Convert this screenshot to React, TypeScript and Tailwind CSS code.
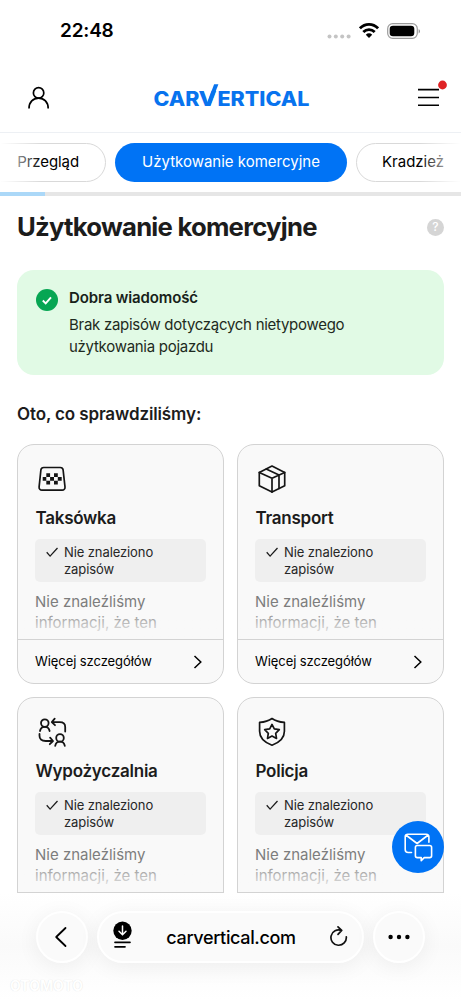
import React from 'react';

const TaxiIcon = () => (
  <svg width="30" height="30" viewBox="0 0 30 30" fill="none" stroke="#151515" strokeWidth="1.700" strokeLinejoin="round">
    <path d="M6.7 3.500h16.600c1.500 0 2.600.9 2.800 2.300l1.900 17.100c.2 2-1 3.300-2.900 3.300H5c-1.900 0-3.100-1.300-2.900-3.300L3.900 5.800c.2-1.400 1.300-2.300 2.800-2.300z" />
    <g fill="#151515" stroke="none">
      <path d="M9.300 9.200h3.800v3.800h-3.800zM17 9.200h3.800v3.800H17zM5.700 13h3.600v3.800H5.700zM13.100 13H17v3.800h-3.900zM20.800 13h3.900v3.800h-3.900zM9.300 16.800h3.800v3.800h-3.800zM17 16.800h3.800v3.800H17z" />
    </g>
  </svg>
);

const BoxIcon = () => (
  <svg width="30" height="30" viewBox="0 0 30 30" fill="none" stroke="#151515" strokeWidth="1.700" strokeLinejoin="round" strokeLinecap="round">
    <path d="M15 2.100l12.700 6.300v13.400L15 28.100 2.300 21.800V8.400z" />
    <path d="M2.300 8.400L15 14.300l12.700-5.900M15 14.300v13.800M9.200 5.100L22 11v13.500" />
  </svg>
);

const RentalIcon = () => (
  <svg width="30" height="30" viewBox="0 0 30 30" fill="none" stroke="#151515" strokeWidth="1.800" strokeLinejoin="round" strokeLinecap="round">
    <circle cx="7.800" cy="6.100" r="3.800" />
    <path d="M3 14c.5-2.700 2.200-4.100 4.800-4.100s4.300 1.400 4.800 4.100" />
    <circle cx="23" cy="20.900" r="3.800" />
    <path d="M18.200 28.800c.5-2.700 2.200-4.100 4.800-4.100s4.300 1.400 4.800 4.100" />
    <path d="M17.700 1.700l-2.900 3.400 3.200 3.100M15.200 5.100h7.600c3.700 0 5.400 1.700 5.400 4.900v4.600" />
    <path d="M13.100 20.600l2.900 3.400-3.200 3.200M15.700 24H8.800c-4.100 0-6.300-2-6.300-5.200v-1.900" />
  </svg>
);

const PoliceIcon = () => (
  <svg width="30" height="30" viewBox="0 0 30 30" fill="none" stroke="#151515" strokeWidth="1.700" strokeLinejoin="round">
    <path d="M15 1.500c3.500 2.500 7.200 3.600 12.400 3.900v8.900c0 6.500-4.300 11-12.400 13.900C6.900 25.300 2.600 20.800 2.600 14.300V5.400C7.800 5.100 11.500 4 15 1.500z" />
    <path d="M15 7.400l2.300 4.500 5 .8-3.600 3.600.8 5.100-4.500-2.300-4.500 2.300.8-5.100-3.600-3.600 5-.8z" />
  </svg>
);

const cards = [
  { title: 'Taksówka', icon: <TaxiIcon />, more: true },
  { title: 'Transport', icon: <BoxIcon />, more: true },
  { title: 'Wypożyczalnia', icon: <RentalIcon />, more: false },
  { title: 'Policja', icon: <PoliceIcon />, more: false },
];

const StatusBar = () => (
  <div className="h-[63px] pl-[60px] pr-[40px] flex items-center justify-between shrink-0">
    <span className="text-[19px] font-semibold text-black tracking-[-0.2px]">22:48</span>
    <div className="flex items-center">
      <svg width="26" height="20" viewBox="0 0 26 20" fill="#c4c4c4">
        <circle cx="3.500" cy="14.500" r="2" />
        <circle cx="9.800" cy="14.500" r="2" />
        <circle cx="16.200" cy="14.500" r="2" />
        <circle cx="22.600" cy="14.500" r="2" />
      </svg>
      <svg className="ml-[7px] mb-[2px]" width="20" height="20" viewBox="0 0 20 20" fill="none" stroke="#000" strokeWidth="2.800">
        <path d="M.9 7.300C6 2 14 2 19.100 7.300" />
        <path d="M4.300 11c3.300-3.300 8.100-3.300 11.400 0" />
        <path d="M10 17l-3.200-3.300c1.800-1.800 4.600-1.800 6.400 0z" fill="#000" stroke="none" />
      </svg>
      <svg className="ml-2 mb-[2px]" width="34" height="20" viewBox="0 0 34 20">
        <rect x=".7" y="2.700" width="29.600" height="14.600" rx="5" fill="none" stroke="#9b9b9b" strokeWidth="1.200" />
        <rect x="2.700" y="4.700" width="24.600" height="10.600" rx="3.300" />
        <path d="M31.700 8v4.400c1.700-.8 1.700-3.600 0-4.400z" fill="#8a8a8a" />
      </svg>
    </div>
  </div>
);

const Logo = () => (
  <svg width="158" height="26" viewBox="0 0 158 26" fill="#0873ee" className="font-['Inter'] font-extrabold text-[20px]">
    <text x="0.500" y="22.500" textLength="46" lengthAdjust="spacingAndGlyphs">CAR</text>
    <text x="45.500" y="22.500" textLength="18" lengthAdjust="spacingAndGlyphs">V</text>
    <path d="M61.100 1.200h4.300L57.300 22.500h-4.300z" />
    <text x="64.500" y="22.500" textLength="92" lengthAdjust="spacingAndGlyphs">ERTICAL</text>
  </svg>
);

const Header = () => (
  <header className="h-[70px] pl-[28px] pr-[14px] flex items-center justify-between border-b border-[#edf0f4] shrink-0">
    <svg width="22" height="24" viewBox="0 0 22 24" fill="none" stroke="#000" strokeWidth="1.700">
      <circle cx="10.600" cy="6.900" r="5.200" />
      <path d="M1 22.500C1 16 5.100 12.100 10.600 12.100S20.200 16 20.200 22.500" />
    </svg>
    <div className="mb-[3px]">
      <Logo />
    </div>
    <svg className="mb-[9px]" width="33" height="30" viewBox="0 0 33 30">
      <path d="M4 11.600h21M4 19.500h21M4 27.300h21" stroke="#000" strokeWidth="1.600" />
      <circle cx="28.500" cy="7" r="4.400" fill="#df2225" />
    </svg>
  </header>
);

const Tabs = () => (
  <nav className="relative h-[59px] pt-[10px] flex items-start gap-[9px] overflow-hidden shrink-0 text-[15px]">
    <div className="h-[39px] w-[136px] -ml-[30px] pr-[26px] shrink-0 rounded-full border border-[#d9d9d9] flex items-center justify-end text-black tracking-[-0.1px]">Przegląd</div>
    <div className="h-[39px] w-[232px] shrink-0 rounded-full bg-[#0073f5] flex items-center justify-center text-white">Użytkowanie komercyjne</div>
    <div className="h-[39px] w-[136px] pl-[25px] shrink-0 rounded-full border border-[#d9d9d9] flex items-center text-black">Kradzież</div>
    <div className="absolute inset-y-0 left-0 w-[42px] bg-gradient-to-r from-white to-white/0"></div>
    <div className="absolute inset-y-0 right-0 w-[42px] bg-gradient-to-l from-white to-white/0"></div>
  </nav>
);

type CheckCardProps = { title: string; icon: React.ReactNode; more: boolean };

const CheckCard = ({ title, icon, more }: CheckCardProps) => (
  <div className="h-[240px] rounded-[17px] border border-[#d3d3d3] bg-[#f9f9f9] overflow-hidden flex flex-col">
    <div className="h-[195px] px-[17px] pt-[19px] border-b border-[#d3d3d3] relative">
      <div className="pl-[2px]">{icon}</div>
      <h3 className="mt-[11px] pl-[0.5px] text-[17px] leading-[26px] font-semibold text-[#1c1c1c] tracking-[-0.25px]">{title}</h3>
      <div className="mt-[8px] h-[43px] pl-[11px] pt-[5px] rounded-[5px] bg-[#efefef] flex gap-[6px]">
        <svg className="mt-[2px]" width="12" height="12" viewBox="0 0 12 12" fill="none" stroke="#1c1c1c" strokeWidth="1.300">
          <path d="M.7 6.300l3.400 3.800L11.500 2" />
        </svg>
        <p className="text-[13px] leading-[17px] text-[#262626] tracking-[-0.1px]">Nie znaleziono<br />zapisów</p>
      </div>
      <p className="mt-[9px] text-[15px] leading-[21px] text-[#7d7d7d]">Nie znaleźliśmy<br />informacji, że ten</p>
      <div className="absolute inset-x-0 bottom-0 h-[32px] bg-gradient-to-t from-[#f9f9f9] to-[#f9f9f9]/0"></div>
    </div>
    {more && (
      <div className="flex-1 pl-[17px] pr-[18px] flex items-center justify-between">
        <span className="text-[13px] text-black tracking-[-0.08px]">Więcej szczegółów</span>
        <svg width="14" height="14" viewBox="0 0 14 14" fill="none" stroke="#000" strokeWidth="1.500">
          <path d="M3.500 1L9.800 7l-6.300 6" />
        </svg>
      </div>
    )}
  </div>
);

const BrowserBar = () => (
  <footer className="relative h-[106px] pt-[18px] flex items-start justify-center gap-[9px] bg-gradient-to-b from-white via-[#fafafa] to-white shrink-0">
    <div className="w-[52px] h-[52px] rounded-full border-2 border-white bg-[#fafafa] shadow-[0_4px_22px_rgba(0,0,0,0.06)] flex items-center justify-center">
      <svg className="mr-[2px]" width="14" height="22" viewBox="0 0 14 22" fill="none" stroke="#000" strokeWidth="1.800" strokeLinecap="round" strokeLinejoin="round">
        <path d="M11.500 2L2.200 11l9.300 9" />
      </svg>
    </div>
    <div className="w-[267px] h-[52px] pl-[14px] pr-[13px] rounded-full border-2 border-white bg-[#fafafa] shadow-[0_4px_22px_rgba(0,0,0,0.06)] flex items-center justify-between">
      <svg className="mb-[4px]" width="20" height="28" viewBox="0 0 20 28" fill="none" strokeLinecap="round">
        <circle cx="9.500" cy="9.800" r="9.200" fill="#000" />
        <path d="M9.500 5v8.500M6 10.300l3.500 3.500 3.500-3.500" stroke="#fff" strokeWidth="1.500" />
        <path d="M2 21.300h15M2 25.800h10" stroke="#000" strokeWidth="1.700" />
      </svg>
      <span className="text-[18px] font-medium text-black tracking-[-0.35px]">carvertical.com</span>
      <svg width="20" height="22" viewBox="0 0 20 22" fill="none" stroke="#111" strokeWidth="1.700" strokeLinecap="round" strokeLinejoin="round">
        <path d="M12.500 4.400A7.700 7.700 0 1 0 17.300 10.800M9 .9l3.700 3.500-3.700 3.900" />
      </svg>
    </div>
    <div className="w-[52px] h-[52px] rounded-full border-2 border-white bg-[#fafafa] shadow-[0_4px_22px_rgba(0,0,0,0.06)] flex items-center justify-center">
      <svg width="22" height="6" viewBox="0 0 22 6">
        <circle cx="2.600" cy="3" r="2.200" />
        <circle cx="11" cy="3" r="2.200" />
        <circle cx="19.400" cy="3" r="2.200" />
      </svg>
    </div>
    <span className="absolute left-[10px] bottom-[6px] text-[14px] leading-[14px] font-bold text-white [text-shadow:0_0_1px_rgba(0,0,0,0.15)]">OTOMOTO</span>
  </footer>
);

const App = () => {
  return (
    <div className="relative w-[461px] h-[999px] bg-white overflow-hidden flex flex-col font-['Inter',sans-serif]">
      <StatusBar />
      <Header />
      <Tabs />
      <div className="h-[4px] bg-[#e6e6e6] shrink-0">
        <div className="h-full w-[45px] bg-[#abd8f8]"></div>
      </div>

      <main className="h-[697px] px-[17px] overflow-hidden shrink-0">
        <div className="h-[62px] flex items-center justify-between">
          <h1 className="text-[25.700px] font-bold text-[#1c1c1c] whitespace-nowrap tracking-[-0.77px]">Użytkowanie komercyjne</h1>
          <div className="w-[17px] h-[17px] rounded-full bg-[#d5d5d5] text-white text-[12px] font-medium flex items-center justify-center">?</div>
        </div>

        <section className="mt-[12px] h-[105px] rounded-[17px] bg-[#e1fae5] pt-[17px] pl-[19px] flex gap-[11px]">
          <svg className="mt-[2px]" width="22" height="22" viewBox="0 0 22 22" fill="none">
            <circle cx="11" cy="11" r="11" fill="#07a653" />
            <path d="M6.800 11.500l2.900 2.900 5.300-6" stroke="#fff" strokeWidth="1.900" />
          </svg>
          <div className="text-[15px] leading-[22.500px] text-[#1e2a21]">
            <h2 className="font-semibold text-[#172119] tracking-[-0.12px]">Dobra wiadomość</h2>
            <p className="mt-[4px] tracking-[-0.28px]">Brak zapisów dotyczących nietypowego<br />użytkowania pojazdu</p>
          </div>
        </section>

        <h2 className="mt-[27px] text-[17px] leading-[24px] font-semibold text-[#1c1c1c] tracking-[-0.12px]">Oto, co sprawdziliśmy:</h2>

        <div className="mt-[18px] grid grid-cols-2 gap-[13px]">
          {cards.map((card) => (
            <CheckCard key={card.title} title={card.title} icon={card.icon} more={card.more} />
          ))}
        </div>
      </main>

      <BrowserBar />

      {/* Floating contact button */}
      <button className="absolute left-[392px] top-[821px] w-[52px] h-[52px] rounded-full bg-[#0073f5] flex items-center justify-center">
        <svg width="30" height="30" viewBox="0 0 30 30" fill="none" stroke="#fff" strokeWidth="1.600" strokeLinejoin="round" strokeLinecap="round">
          <path d="M8.500 20.500H5.200c-1.900 0-3-1.100-3-3V4.900c0-1.700 1-2.700 2.700-2.700h18.300c1.700 0 2.700 1 2.700 2.700v5.300M2.900 3l11.200 8.500L25.200 3" />
          <path d="M14.300 13.500h12.400c1.200 0 1.900.7 1.900 1.900v8.300c0 1.200-.7 1.900-1.900 1.900h-5.500l-3 3v-3h-3.900c-1.200 0-1.900-.7-1.900-1.900v-8.300c0-1.200.7-1.900 1.900-1.900z" />
        </svg>
      </button>
    </div>
  );
};

export default App;
